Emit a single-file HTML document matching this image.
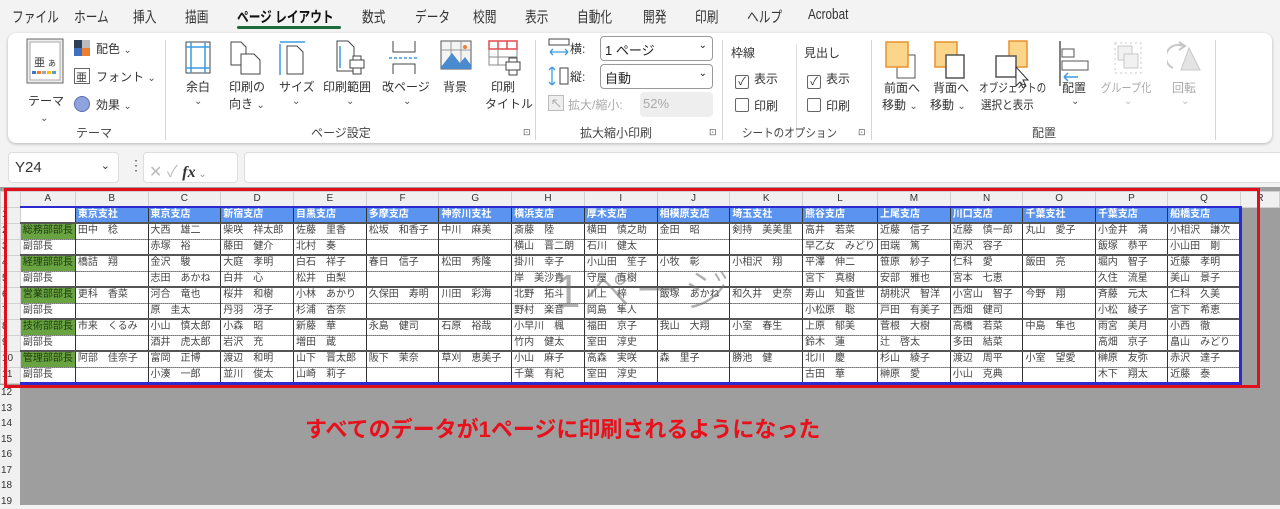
<!DOCTYPE html>
<html><head><meta charset="utf-8">
<style>
*{box-sizing:border-box;margin:0;padding:0}
body{width:1280px;height:505px;overflow:hidden;background:#f3f3f3;font-family:"Liberation Sans","Noto Sans CJK JP",sans-serif;position:relative;color:#222}
.a{position:absolute;white-space:nowrap}
.tab{top:6px;font-size:15px;color:#333;transform:scaleX(.78);transform-origin:left top}
.rib{position:absolute;left:8px;top:33px;width:1264px;height:110px;background:#fff;border-radius:8px;box-shadow:0 1px 3px rgba(0,0,0,.25)}
.lbl{font-size:12px;color:#333}
.sep{position:absolute;top:40px;width:1px;height:100px;background:#d6d6d6}
.gl{top:124px;font-size:12px;color:#444}
.chev{font-size:10px;color:#555}
.cb{display:inline-block;width:14px;height:14px;border:1px solid #666;border-radius:2px;vertical-align:-2px;margin-right:5px;font-size:11px;line-height:12px;text-align:center}
#sheet{position:absolute;left:0;top:187px;width:1280px;height:318px;background:#9e9e9e}
table{border-collapse:collapse;table-layout:fixed;position:absolute;left:0;top:4px;font-size:10px}
td{height:16px;padding:0 2px;overflow:hidden;white-space:nowrap;background:#fff;color:#444;border-left:1.5px solid #333;border-right:1.5px solid #333;line-height:14px}
tr.ch td{height:14px;background:#f0f0f0;color:#333;text-align:center;border:1px solid #d0d0d0;font-size:10px}
td.rh{background:#f0f0f0;border:1px solid #d0d0d0;color:#333;padding-left:1px;font-size:10px}
tr.h td.c{background:#5a93f0;color:#fff;font-weight:bold;border-top:2px solid #2a2ad0}
tr.o td.c{border-top:2px solid #555;border-bottom:1px dotted #777}
tr.e td.c{border-bottom:1px dotted #777}
td.g{background:#6aa341 !important;color:#1a3a10}
td.b{border-bottom:3px solid #2a2ad0 !important}
td.x{background:#9e9e9e;border:none;border-left:3px solid #2a2ad0}
</style></head><body>
<div class="a tab" style="left:12px">ファイル</div>
<div class="a tab" style="left:74px">ホーム</div>
<div class="a tab" style="left:133px">挿入</div>
<div class="a tab" style="left:185px">描画</div>
<div class="a tab" style="left:237px;font-weight:bold;color:#111">ページ レイアウト</div>
<div class="a" style="left:237px;top:26px;width:104px;height:3px;background:#1e6b3e;border-radius:2px"></div>
<div class="a tab" style="left:362px">数式</div>
<div class="a tab" style="left:415px">データ</div>
<div class="a tab" style="left:473px">校閲</div>
<div class="a tab" style="left:525px">表示</div>
<div class="a tab" style="left:577px">自動化</div>
<div class="a tab" style="left:643px">開発</div>
<div class="a tab" style="left:695px">印刷</div>
<div class="a tab" style="left:747px">ヘルプ</div>
<div class="a tab" style="left:808px">Acrobat</div>

<div class="rib"></div>
<svg class="a" style="left:26px;top:38px" width="38" height="46"><rect x="1" y="1" width="36" height="44" fill="#eee" stroke="#666"/><rect x="4" y="4" width="30" height="38" fill="#fff" stroke="#aaa"/><text x="8" y="28" font-size="11" fill="#333">亜</text><text x="22" y="28" font-size="8" fill="#333">あ</text><rect x="6" y="33" width="4" height="3" fill="#4472c4"/><rect x="11" y="33" width="4" height="3" fill="#ed7d31"/><rect x="16" y="33" width="4" height="3" fill="#a5a5a5"/><rect x="21" y="33" width="4" height="3" fill="#ffc000"/><rect x="26" y="33" width="4" height="3" fill="#5b9bd5"/></svg>
<div class="a lbl" style="left:28px;top:92px">テーマ</div>
<div class="a chev" style="left:40px;top:113px">⌄</div>
<svg class="a" style="left:74px;top:40px" width="16" height="16"><rect width="8" height="8" fill="#2f3f5a"/><rect x="8" width="8" height="8" fill="#bbb"/><rect y="8" width="8" height="8" fill="#3f6fc0"/><rect x="8" y="8" width="8" height="8" fill="#ed7d31"/></svg>
<div class="a lbl" style="left:96px;top:40px">配色 <span class="chev">⌄</span></div>
<svg class="a" style="left:74px;top:68px" width="16" height="16"><rect x=".5" y=".5" width="15" height="15" fill="#fff" stroke="#666"/><text x="2" y="13" font-size="11" fill="#333">亜</text></svg>
<div class="a lbl" style="left:96px;top:68px">フォント <span class="chev">⌄</span></div>
<svg class="a" style="left:74px;top:96px" width="16" height="16"><circle cx="8" cy="8" r="7.5" fill="#8fa4dc" stroke="#5a6fb0"/></svg>
<div class="a lbl" style="left:96px;top:96px">効果 <span class="chev">⌄</span></div>
<div class="a gl" style="left:76px">テーマ</div>
<div class="sep" style="left:165px"></div>

<svg class="a" style="left:185px;top:41px" width="26" height="33"><rect x="1" y="1" width="24" height="31" fill="#fff" stroke="#444"/><path d="M6 1V32M20 1V32M1 6H25M1 27H25" stroke="#3c9be0" stroke-width="1.5"/></svg>
<div class="a lbl" style="left:186px;top:78px">余白</div><div class="a chev" style="left:194px;top:96px">⌄</div>
<svg class="a" style="left:230px;top:41px" width="32" height="34"><path d="M1 1H11L16 6V24H1Z" fill="#fff" stroke="#444"/><path d="M11 13H24L30 19V33H11Z" fill="#fff" stroke="#444"/></svg>
<div class="a lbl" style="left:229px;top:78px">印刷の</div><div class="a lbl" style="left:229px;top:95px">向き <span class="chev">⌄</span></div>
<svg class="a" style="left:279px;top:40px" width="30" height="36"><path d="M1 2H26M1 4V35" stroke="#3c9be0" stroke-width="1.5"/><path d="M8 6H18L24 12V34H8Z" fill="#fff" stroke="#444"/></svg>
<div class="a lbl" style="left:279px;top:78px">サイズ</div><div class="a chev" style="left:292px;top:96px">⌄</div>
<svg class="a" style="left:336px;top:40px" width="30" height="36"><path d="M1 1H12L18 7V31H1Z" fill="#fff" stroke="#444"/><path d="M4 6V28" stroke="#3c9be0" stroke-width="1.5"/><rect x="14" y="20" width="14" height="8" fill="#fff" stroke="#444"/><rect x="17" y="16" width="8" height="4" fill="#fff" stroke="#444"/><rect x="17" y="28" width="8" height="6" fill="#fff" stroke="#444"/></svg>
<div class="a lbl" style="left:323px;top:78px">印刷範囲</div><div class="a chev" style="left:346px;top:96px">⌄</div>
<svg class="a" style="left:388px;top:40px" width="32" height="36"><path d="M5 1V12H27V1M5 34V24H27V34" fill="none" stroke="#444"/><path d="M1 18H31" stroke="#3c9be0" stroke-dasharray="3 2" stroke-width="1.5"/></svg>
<div class="a lbl" style="left:382px;top:78px">改ページ</div><div class="a chev" style="left:403px;top:96px">⌄</div>
<svg class="a" style="left:440px;top:40px" width="32" height="32"><rect x="1" y="1" width="30" height="28" fill="#f4f4f4" stroke="#555"/><path d="M1 10H31M11 1V29M21 1V29" stroke="#999"/><path d="M1 27L12 13L20 23L25 17L31 25V29H1Z" fill="#4a8bd0"/><circle cx="25" cy="7" r="2" fill="#ed7d31"/></svg>
<div class="a lbl" style="left:443px;top:78px">背景</div>
<svg class="a" style="left:488px;top:40px" width="34" height="36"><rect x="1" y="1" width="28" height="24" fill="#fff" stroke="#888"/><path d="M1 1H29V9H1ZM10 1V9M19 1V9" fill="none" stroke="#e24a4a" stroke-width="1.5"/><path d="M1 17H29M10 9V25" stroke="#888"/><rect x="18" y="22" width="14" height="8" fill="#fff" stroke="#444"/><rect x="21" y="18" width="8" height="4" fill="#fff" stroke="#444"/><rect x="21" y="30" width="8" height="5" fill="#fff" stroke="#444"/></svg>
<div class="a lbl" style="left:491px;top:78px">印刷</div><div class="a lbl" style="left:485px;top:95px">タイトル</div>
<div class="a gl" style="left:311px">ページ設定</div>
<div class="a" style="left:523px;top:127px;font-size:9px;color:#555">⊡</div>
<div class="sep" style="left:535px"></div>

<svg class="a" style="left:548px;top:38px" width="22" height="18"><path d="M1 1H21V7H1Z" fill="none" stroke="#444"/><path d="M2 14H20M2 14L5 11M2 14L5 17M20 14L17 11M20 14L17 17" stroke="#3c9be0" stroke-width="1.3" fill="none"/></svg>
<div class="a lbl" style="left:570px;top:40px">横:</div>
<div class="a" style="left:600px;top:36px;width:113px;height:25px;border:1px solid #999;border-radius:4px;font-size:13px;padding:3px 4px">1 ページ<span style="position:absolute;right:5px;top:3px;font-size:10px">⌄</span></div>
<svg class="a" style="left:548px;top:65px" width="22" height="22"><path d="M4 2V20M4 2L1 5M4 2L7 5M4 20L1 17M4 20L7 17" stroke="#3c9be0" stroke-width="1.3" fill="none"/><rect x="12" y="3" width="8" height="16" fill="none" stroke="#444"/></svg>
<div class="a lbl" style="left:570px;top:68px">縦:</div>
<div class="a" style="left:600px;top:64px;width:113px;height:25px;border:1px solid #999;border-radius:4px;font-size:13px;padding:3px 4px">自動<span style="position:absolute;right:5px;top:3px;font-size:10px">⌄</span></div>
<svg class="a" style="left:548px;top:95px" width="16" height="16"><rect x=".5" y=".5" width="15" height="15" fill="#eee" stroke="#bbb"/><path d="M5 5L12 12M5 5H9M5 5V9" stroke="#aaa"/></svg>
<div class="a lbl" style="left:568px;top:96px;color:#aaa">拡大/縮小:</div>
<div class="a" style="left:640px;top:92px;width:73px;height:25px;background:#eee;border-radius:4px;font-size:13px;padding:4px 3px;color:#aaa">52%</div>
<div class="a gl" style="left:580px">拡大縮小印刷</div>
<div class="a" style="left:709px;top:127px;font-size:9px;color:#555">⊡</div>
<div class="sep" style="left:722px"></div>

<div class="a lbl" style="left:731px;top:44px">枠線</div>
<div class="a lbl" style="left:735px;top:70px"><span class="cb">✓</span>表示</div>
<div class="a lbl" style="left:735px;top:97px"><span class="cb"></span>印刷</div>
<div class="a" style="left:796px;top:44px;width:1px;height:92px;background:#ddd"></div>
<div class="a lbl" style="left:804px;top:44px">見出し</div>
<div class="a lbl" style="left:807px;top:70px"><span class="cb">✓</span>表示</div>
<div class="a lbl" style="left:807px;top:97px"><span class="cb"></span>印刷</div>
<div class="a gl" style="left:742px;transform:scaleX(.88);transform-origin:left">シートのオプション</div>
<div class="a" style="left:858px;top:127px;font-size:9px;color:#555">⊡</div>
<div class="sep" style="left:871px"></div>

<svg class="a" style="left:885px;top:40px" width="34" height="48"><rect x="12" y="15" width="18" height="23" fill="#fff" stroke="#555"/><rect x="1" y="2" width="22" height="25" fill="#fbd68a" stroke="#e8922e" stroke-width="1.5"/></svg>
<div class="a lbl" style="left:884px;top:79px">前面へ</div><div class="a lbl" style="left:882px;top:96px">移動 <span class="chev">⌄</span></div>
<svg class="a" style="left:934px;top:40px" width="34" height="48"><rect x="1" y="2" width="22" height="25" fill="#fbd68a" stroke="#e8922e" stroke-width="1.5"/><rect x="12" y="15" width="18" height="23" fill="#fff" stroke="#555" stroke-width="1.5"/></svg>
<div class="a lbl" style="left:933px;top:79px">背面へ</div><div class="a lbl" style="left:930px;top:96px">移動 <span class="chev">⌄</span></div>
<svg class="a" style="left:995px;top:40px" width="36" height="48"><rect x="14" y="1" width="18" height="26" fill="#fbd68a" stroke="#e8922e" stroke-width="1.5"/><rect x="1" y="16" width="20" height="21" fill="#fff" stroke="#555" stroke-width="1.5"/><path d="M21 27L21 46L25 42L28 48L31 46L28 40L33 40Z" fill="#fff" stroke="#333"/></svg>
<div class="a lbl" style="left:979px;top:79px;transform:scaleX(.8);transform-origin:left">オブジェクトの</div><div class="a lbl" style="left:981px;top:96px;transform:scaleX(.88);transform-origin:left">選択と表示</div>
<svg class="a" style="left:1058px;top:40px" width="34" height="46"><path d="M2 1V46" stroke="#555" stroke-width="1.5"/><rect x="4" y="9" width="12" height="8" fill="#fff" stroke="#555"/><rect x="4" y="21" width="26" height="9" fill="#fff" stroke="#555"/><path d="M6 37H20M6 37L10 33M6 37L10 41" stroke="#3c9be0" stroke-width="1.5" fill="none"/></svg>
<div class="a lbl" style="left:1062px;top:79px">配置</div><div class="a chev" style="left:1071px;top:96px">⌄</div>
<svg class="a" style="left:1112px;top:40px" width="32" height="46" opacity=".4"><rect x="3" y="3" width="26" height="30" fill="none" stroke="#777" stroke-dasharray="2 3"/><rect x="6" y="6" width="14" height="14" fill="#ddd" stroke="#777"/><rect x="12" y="14" width="14" height="14" fill="#ddd" stroke="#777"/></svg>
<div class="a lbl" style="left:1101px;top:79px;color:#aaa;transform:scaleX(.85);transform-origin:left">グループ化</div><div class="a chev" style="left:1124px;top:96px;color:#bbb">⌄</div>
<svg class="a" style="left:1167px;top:40px" width="34" height="34" opacity=".4"><path d="M6 28A12 12 0 0 1 16 6" fill="none" stroke="#777" stroke-width="2"/><path d="M12 2L18 6L12 10" fill="none" stroke="#777" stroke-width="2"/><path d="M22 8L33 30H14Z" fill="#bbb" stroke="#777"/></svg>
<div class="a lbl" style="left:1172px;top:79px;color:#aaa">回転</div><div class="a chev" style="left:1181px;top:96px;color:#bbb">⌄</div>
<div class="a gl" style="left:1032px">配置</div>
<div class="sep" style="left:1215px"></div>

<div class="a" style="left:8px;top:152px;width:111px;height:31px;background:#fff;border:1px solid #ddd;border-radius:4px;font-size:15px;padding:6px 6px;color:#333">Y24<span style="position:absolute;right:8px;top:6px;font-size:11px">⌄</span></div>
<div class="a" style="left:129px;top:157px;font-size:14px;color:#555">⋮</div>
<div class="a" style="left:143px;top:152px;width:95px;height:31px;background:#fff;border:1px solid #ddd;border-radius:4px;font-size:16px;padding:5px 5px;color:#bbb">✕ ✓ <i style="font-family:'Liberation Serif',serif;color:#333;font-weight:bold">fx</i><span style="font-size:10px;color:#999"> ⌄</span></div>
<div class="a" style="left:244px;top:152px;width:1040px;height:31px;background:#fff;border:1px solid #ddd;border-radius:4px"></div>

<div id="sheet">
<table>
<colgroup><col style="width:20px"><col style="width:53px"><col style="width:73px" span="16"><col style="width:40px"></colgroup>
<tr class="ch"><td style="background:#f0f0f0"></td><td>A</td><td>B</td><td>C</td><td>D</td><td>E</td><td>F</td><td>G</td><td>H</td><td>I</td><td>J</td><td>K</td><td>L</td><td>M</td><td>N</td><td>O</td><td>P</td><td>Q</td><td>R</td></tr>
<tr class="h"><td class="rh">1</td><td class="c" style="background:#fff"></td><td class="c">東京支社</td><td class="c">東京支店</td><td class="c">新宿支店</td><td class="c">目黒支店</td><td class="c">多摩支店</td><td class="c">神奈川支社</td><td class="c">横浜支店</td><td class="c">厚木支店</td><td class="c">相模原支店</td><td class="c">埼玉支社</td><td class="c">熊谷支店</td><td class="c">上尾支店</td><td class="c">川口支店</td><td class="c">千葉支社</td><td class="c">千葉支店</td><td class="c">船橋支店</td><td class="x"></td></tr>
<tr class="o"><td class="rh">2</td><td class="c g">総務部部長</td><td class="c">田中　稔</td><td class="c">大西　雄二</td><td class="c">柴咲　祥太郎</td><td class="c">佐藤　里香</td><td class="c">松坂　和香子</td><td class="c">中川　麻美</td><td class="c">斎藤　陸</td><td class="c">横田　慎之助</td><td class="c">金田　昭</td><td class="c">剣持　美美里</td><td class="c">高井　若菜</td><td class="c">近藤　信子</td><td class="c">近藤　慎一郎</td><td class="c">丸山　愛子</td><td class="c">小金井　満</td><td class="c">小相沢　謙次</td><td class="x"></td></tr>
<tr class="e"><td class="rh">3</td><td class="c">副部長</td><td class="c"></td><td class="c">赤塚　裕</td><td class="c">藤田　健介</td><td class="c">北村　奏</td><td class="c"></td><td class="c"></td><td class="c">横山　晋二朗</td><td class="c">石川　健太</td><td class="c"></td><td class="c"></td><td class="c">早乙女　みどり</td><td class="c">田端　篤</td><td class="c">南沢　容子</td><td class="c"></td><td class="c">飯塚　恭平</td><td class="c">小山田　剛</td><td class="x"></td></tr>
<tr class="o"><td class="rh">4</td><td class="c g">経理部部長</td><td class="c">橋詰　翔</td><td class="c">金沢　駿</td><td class="c">大庭　孝明</td><td class="c">白石　祥子</td><td class="c">春日　信子</td><td class="c">松田　秀隆</td><td class="c">掛川　幸子</td><td class="c">小山田　笙子</td><td class="c">小牧　彰</td><td class="c">小相沢　翔</td><td class="c">平澤　伸二</td><td class="c">笹原　紗子</td><td class="c">仁科　愛</td><td class="c">飯田　亮</td><td class="c">堀内　智子</td><td class="c">近藤　孝明</td><td class="x"></td></tr>
<tr class="e"><td class="rh">5</td><td class="c">副部長</td><td class="c"></td><td class="c">志田　あかね</td><td class="c">白井　心</td><td class="c">松井　由梨</td><td class="c"></td><td class="c"></td><td class="c">岸　美沙貴</td><td class="c">守屋　直樹</td><td class="c"></td><td class="c"></td><td class="c">宮下　真樹</td><td class="c">安部　雅也</td><td class="c">宮本　七恵</td><td class="c"></td><td class="c">久住　流星</td><td class="c">美山　景子</td><td class="x"></td></tr>
<tr class="o"><td class="rh">6</td><td class="c g">営業部部長</td><td class="c">更科　香菜</td><td class="c">河合　竜也</td><td class="c">桜井　和樹</td><td class="c">小林　あかり</td><td class="c">久保田　寿明</td><td class="c">川田　彩海</td><td class="c">北野　拓斗</td><td class="c">川上　梓</td><td class="c">飯塚　あかね</td><td class="c">和久井　史奈</td><td class="c">寿山　知査世</td><td class="c">胡桃沢　智洋</td><td class="c">小宮山　智子</td><td class="c">今野　翔</td><td class="c">斉藤　元太</td><td class="c">仁科　久美</td><td class="x"></td></tr>
<tr class="e"><td class="rh">7</td><td class="c">副部長</td><td class="c"></td><td class="c">原　圭太</td><td class="c">丹羽　冴子</td><td class="c">杉浦　杏奈</td><td class="c"></td><td class="c"></td><td class="c">野村　楽音</td><td class="c">岡島　隼人</td><td class="c"></td><td class="c"></td><td class="c">小松原　聡</td><td class="c">戸田　有美子</td><td class="c">西畑　健司</td><td class="c"></td><td class="c">小松　綾子</td><td class="c">宮下　希恵</td><td class="x"></td></tr>
<tr class="o"><td class="rh">8</td><td class="c g">技術部部長</td><td class="c">市来　くるみ</td><td class="c">小山　慎太郎</td><td class="c">小森　昭</td><td class="c">新藤　華</td><td class="c">永島　健司</td><td class="c">石原　裕哉</td><td class="c">小早川　楓</td><td class="c">福田　京子</td><td class="c">我山　大翔</td><td class="c">小室　春生</td><td class="c">上原　郁美</td><td class="c">菅根　大樹</td><td class="c">高橋　若菜</td><td class="c">中島　隼也</td><td class="c">雨宮　美月</td><td class="c">小西　徹</td><td class="x"></td></tr>
<tr class="e"><td class="rh">9</td><td class="c">副部長</td><td class="c"></td><td class="c">酒井　虎太郎</td><td class="c">岩沢　充</td><td class="c">増田　蔵</td><td class="c"></td><td class="c"></td><td class="c">竹内　健太</td><td class="c">室田　淳史</td><td class="c"></td><td class="c"></td><td class="c">鈴木　蓮</td><td class="c">辻　啓太</td><td class="c">多田　結菜</td><td class="c"></td><td class="c">高畑　京子</td><td class="c">畠山　みどり</td><td class="x"></td></tr>
<tr class="o"><td class="rh">10</td><td class="c g">管理部部長</td><td class="c">阿部　佳奈子</td><td class="c">富岡　正博</td><td class="c">渡辺　和明</td><td class="c">山下　晋太郎</td><td class="c">阪下　茉奈</td><td class="c">草刈　恵美子</td><td class="c">小山　麻子</td><td class="c">高森　実咲</td><td class="c">森　里子</td><td class="c">勝池　健</td><td class="c">北川　慶</td><td class="c">杉山　綾子</td><td class="c">渡辺　周平</td><td class="c">小室　望愛</td><td class="c">榊原　友弥</td><td class="c">赤沢　達子</td><td class="x"></td></tr>
<tr class="e"><td class="rh">11</td><td class="c b">副部長</td><td class="c b"></td><td class="c b">小湊　一郎</td><td class="c b">並川　俊太</td><td class="c b">山崎　莉子</td><td class="c b"></td><td class="c b"></td><td class="c b">千葉　有紀</td><td class="c b">室田　淳史</td><td class="c b"></td><td class="c b"></td><td class="c b">古田　華</td><td class="c b">榊原　愛</td><td class="c b">小山　克典</td><td class="c b"></td><td class="c b">木下　翔太</td><td class="c b">近藤　泰</td><td class="x"></td></tr>
</table>
<div class="a" style="left:0;top:198px;width:20px;height:120px;background:#f0f0f0;font-size:10px;line-height:15.5px;color:#333;padding-left:1px">12<br>13<br>14<br>15<br>16<br>17<br>18<br>19</div>
<div class="a" style="left:555px;top:68px;font-size:46px;color:rgba(110,110,110,.55);letter-spacing:4px;font-weight:300">1ページ</div>
<div class="a" style="left:4px;top:1px;width:1256px;height:200px;border:3px solid #e0101a"></div>
<div class="a" style="left:305px;top:225px;font-size:22px;font-weight:bold;color:#e8101a">すべてのデータが1ページに印刷されるようになった</div>
</div>
</body></html>
